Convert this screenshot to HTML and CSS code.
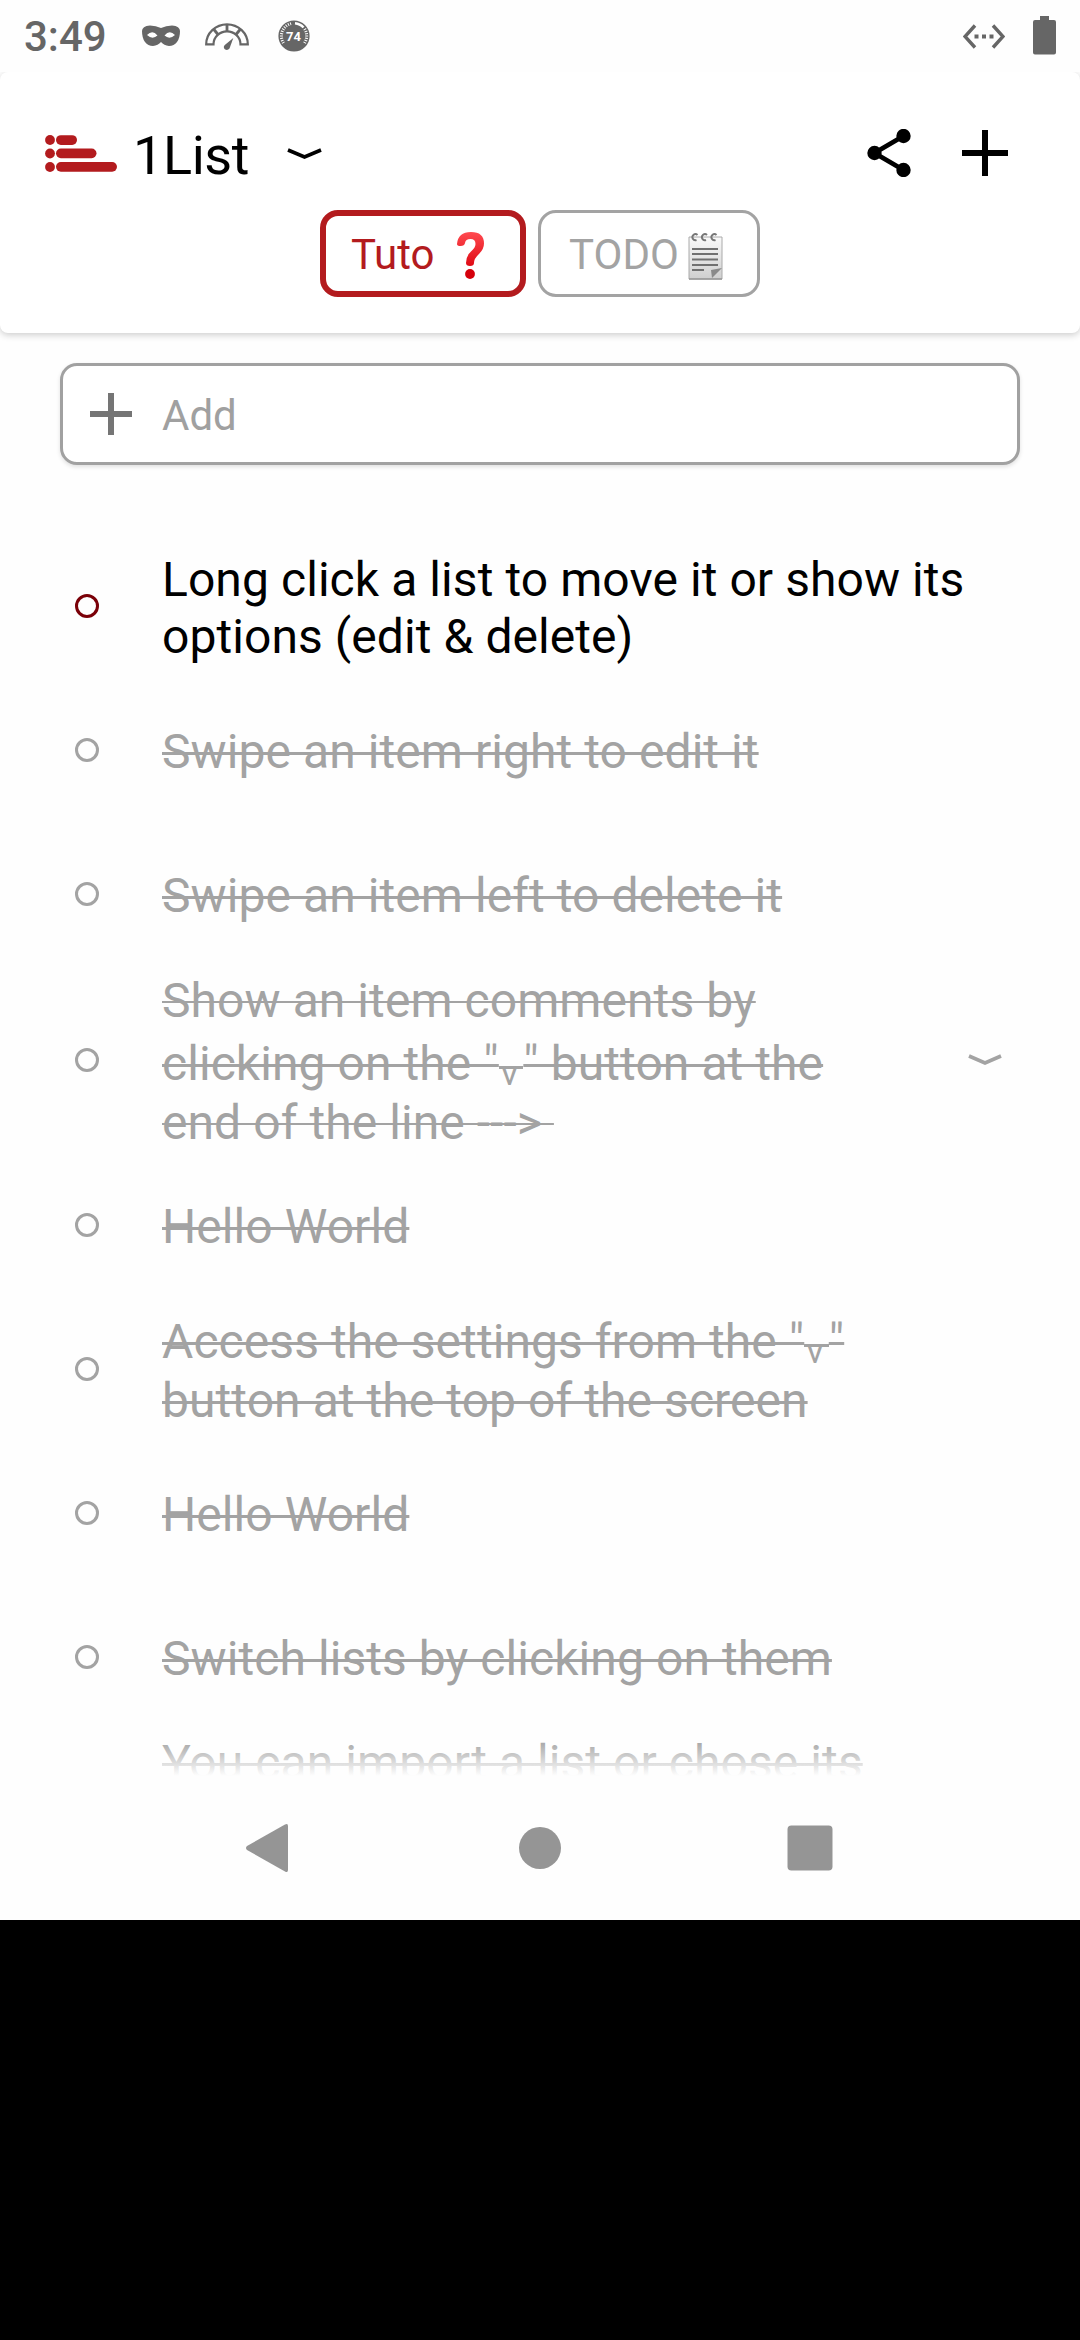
FILE: index.html
```html
<!DOCTYPE html>
<html lang="en">
<head>
<meta charset="utf-8">
<title>1List</title>
<link rel="stylesheet" href="styles.css">
</head>
<body>
<div class="phone">
  <div class="status">
    <span class="clock">3:49</span>
    <svg class="ic-mask" width="38" height="22" viewBox="0 0 38 22"><path fill="#666" fill-rule="evenodd" d="M0 6Q0 1 8 .4Q14 .4 19 3Q24 .4 30 .4Q38 1 38 6Q38 13 35 17Q32 21 27 21Q22 20.500 19 17Q16 20.500 11 21Q6 21 3 17Q0 13 0 6ZM5 10Q10.500 15 15.500 10.500Q10.500 4.500 5 10ZM22.500 10.500Q27.500 15 33 10Q27.500 4.500 22.500 10.500Z"/></svg>
    <svg class="ic-gauge" width="44" height="28" viewBox="0 0 44 28"><g fill="none" stroke="#666" stroke-width="2.200"><path d="M1.200 21.300A20.800 20 0 0 1 42.800 21.300H35.500A13.500 13 0 0 0 8.500 21.300Z"/><path stroke-width="2.800" d="M22 1V8.500M8.500 6L13 11.500M35.500 6L31 11.500"/></g><path fill="#666" d="M28.300 15L24.500 25.500Q22.500 28 19.800 26.300Q17.800 24 19.800 22Z"/></svg>
    <svg class="ic-temp" width="32" height="32" viewBox="0 0 32 32"><circle cx="16" cy="16" r="15.600" fill="#666"/><path d="M5.500 23A12.800 12.800 0 0 1 14 3.400M26.500 23A12.800 12.800 0 0 0 26 8" fill="none" stroke="#fff" stroke-width="3" stroke-dasharray="1 1.300"/><path d="M17 3.200A12.800 12.800 0 0 1 25.500 7.500" fill="none" stroke="#fff" stroke-width="2.600"/><text x="15.500" y="21" text-anchor="middle" class="temp">74</text></svg>
    <span class="grow"></span>
    <svg class="ic-net" width="42" height="26" viewBox="0 0 42 26"><path d="M12 1.500L2 12.500L12 23.500M30 1.500L40 12.500L30 23.500" fill="none" stroke="#666" stroke-width="3.400"/><path fill="#666" d="M11.500 10.500h4v4h-4zM19 10.500h4v4h-4zM26.500 10.500h4v4h-4z"/></svg>
    <svg class="ic-bat" width="23" height="39" viewBox="0 0 23 39"><path fill="#666" d="M7 0H16V4H21Q23 4 23 6V36.500Q23 38.500 21 38.500H2Q0 38.500 0 36.500V6Q0 4 2 4H7Z"/></svg>
  </div>
  <header class="header">
    <div class="bar">
      <svg class="logo" width="72" height="38" viewBox="0 0 72 38"><g fill="#b31b1e"><circle cx="5" cy="5" r="4.900"/><circle cx="5" cy="18.500" r="4.900"/><circle cx="5" cy="32" r="4.900"/><rect x="11" y=".2" width="21" height="9.700" rx="4.850"/><rect x="11" y="13.500" width="40.500" height="9.700" rx="4.850"/><rect x="11" y="27" width="61" height="9.700" rx="4.850"/></g></svg>
      <h1 class="title">1List</h1>
      <svg class="chev" width="35" height="12" viewBox="0 0 35 12"><path d="M1 2L17.500 9L34 2" fill="none" stroke="#000" stroke-width="3.600"/></svg>
      <span class="grow"></span>
      <svg class="share" width="44" height="48" viewBox="0 0 44 48"><path d="M36.500 7L7.500 24L36.500 41" fill="none" stroke="#000" stroke-width="4.800"/><circle cx="36.500" cy="7" r="7.200"/><circle cx="7.500" cy="24" r="7.200"/><circle cx="36.500" cy="41" r="7.200"/></svg>
      <svg class="plus" width="46" height="46" viewBox="0 0 46 46"><path d="M20 0h6v20h20v6H26v20H20V26H0V20H20z"/></svg>
    </div>
    <div class="tabs">
      <div class="tab active"><span>Tuto</span>
        <svg class="q" width="27" height="48" viewBox="0 0 27 48"><defs><linearGradient id="qg" x1="0" y1="0" x2="0" y2="1"><stop offset="0" stop-color="#ff4a50"/><stop offset="1" stop-color="#df0a14"/></linearGradient></defs><path d="M0 12Q1 0 14 0Q27 0 27 11.500Q27 17 22 22Q17 26.500 17 31Q17 34 13 34Q9 34 9 31Q9 24 14 19.500Q18.500 15.500 18.500 12Q18.500 7 13.500 7Q8.500 7 8 11Q7.500 14 3.500 14Q0 14 0 12Z" fill="url(#qg)"/><circle cx="13" cy="42" r="4.900" fill="#d5000b"/></svg>
      </div>
      <div class="tab"><span>TODO</span>
        <svg class="note" width="35" height="47" viewBox="0 0 35 47"><defs><linearGradient id="ng" x1="0" y1="0" x2="0" y2="1"><stop offset="0" stop-color="#fafafa"/><stop offset="1" stop-color="#cfcfcf"/></linearGradient></defs><path d="M1 4H34V46H1Z" fill="url(#ng)" stroke="#aaa" stroke-width="1"/><path d="M1 46H34" stroke="#999" stroke-width="1.500"/><path d="M4 16H30M4 21H30M4 26.500H30M4 32H30M4 37H16" stroke="#707070" stroke-width="2"/><path d="M23 37L34 35L24 45Z" fill="#8a8a8a"/><path d="M8.500 7A3 3 0 1 1 9.500 2M18 7A3 3 0 1 1 19 2M27.500 7A3 3 0 1 1 28.500 2" fill="none" stroke="#777" stroke-width="2"/></svg>
      </div>
    </div>
  </header>
  <main class="content">
    <div class="add"><svg width="42" height="42" viewBox="0 0 42 42"><path fill="#757575" d="M18 0h6v18h18v6H24v18H18V24H0V18H18z"/></svg><span>Add</span></div>
    <ul class="list">
      <li class="item open"><i class="dot"></i><p><span>Long click a list to move it or show its</span><span>options (edit &amp; delete)</span></p></li>
      <li class="item"><i class="dot"></i><p><span>Swipe an item right to edit it</span></p></li>
      <li class="item"><i class="dot"></i><p><span>Swipe an item left to delete it</span></p></li>
      <li class="item three"><i class="dot"></i><p><span class="thin">Show an item comments by</span><span class="tall">clicking on the "<b>v</b>" button at the</span><span class="thin">end of the line ---&gt;&nbsp;</span></p><svg class="chev" width="34" height="12" viewBox="0 0 34 12"><path d="M1 2L17 9L33 2" fill="none" stroke="#a3a3a3" stroke-width="3.600"/></svg></li>
      <li class="item"><i class="dot"></i><p><span>Hello World</span></p></li>
      <li class="item two"><i class="dot"></i><p><span class="tall">Access the settings from the "<b>v</b>"</span><span>button at the top of the screen</span></p></li>
      <li class="item"><i class="dot"></i><p><span>Hello World</span></p></li>
      <li class="item"><i class="dot"></i><p><span>Switch lists by clicking on them</span></p></li>
      <li class="item last"><p><span>You can import a list or chose its</span></p></li>
    </ul>
    <div class="fade"></div>
  </main>
  <nav class="nav">
    <svg width="42" height="48" viewBox="0 0 42 48"><path fill="#959595" d="M39 .5Q42 -1 42 2V46Q42 49 39 47.500L1 26Q-1 24 1 22Z"/></svg>
    <svg width="42" height="42" viewBox="0 0 42 42"><circle cx="21" cy="21" r="21" fill="#959595"/></svg>
    <svg width="46" height="46" viewBox="0 0 46 46"><rect x=".5" y=".5" width="45" height="45" rx="4" fill="#959595"/></svg>
  </nav>
</div>
</body>
</html>
```
FILE: styles.css
```css
* { box-sizing: border-box; margin: 0; padding: 0; }
body { background: #000; font-family: Roboto, sans-serif; }
svg { display: block; flex: none; }
.phone { width: 1080px; height: 1920px; background: #fefefe; display: flex; flex-direction: column; }
.grow { flex: 1; }
.status { height: 72px; flex: none; display: flex; align-items: flex-start; color: #666; padding: 0 24px; }
.clock { font-size: 42px; line-height: 50px; font-weight: 500; margin-top: 12px; width: 118px; }
.ic-mask { margin-top: 25px; }
.ic-gauge { margin: 23px 0 0 25px; }
.ic-temp { margin: 20px 0 0 29px; }
.temp { font: 700 13px Roboto, sans-serif; fill: #fff; }
.ic-net { margin: 24px 28px 0 0; }
.ic-bat { margin-top: 16px; }
.header { height: 261px; flex: none; background: #fff; border-radius: 8px; box-shadow: 0 2px 7px rgba(0,0,0,.2); clip-path: inset(0 0 -20px 0); }
.bar { height: 138px; padding: 0 72px 0 45px; display: flex; align-items: flex-start; }
.logo { margin-top: 63px; }
.title { font-size: 54px; font-weight: 400; line-height: 64px; letter-spacing: -.4px; margin: 52px 0 0 16px; width: 154px; }
.bar .chev { margin-top: 76px; }
.share { margin: 57px 51px 0 0; }
.plus { margin-top: 58px; }
.tabs { display: flex; justify-content: center; gap: 12px; height: 87px; }
.tab { width: 222px; border: 3px solid #a3a3a3; border-radius: 18px; color: #a3a3a3; font-size: 42px; line-height: 50px; padding: 17px 0 0 28px; display: flex; }
.tab.active { width: 206px; border: 6px solid #b31b1e; color: #b31b1e; padding: 14px 0 0 25px; }
.q { margin: 2px 0 0 22px; }
.note { margin: 3px 0 0 9px; }
.content { position: relative; flex: 1; padding-top: 30px; }
.add { margin: 0 60px; height: 102px; border: 3px solid #a1a1a1; border-radius: 17px; background: #fff; box-shadow: 0 2px 4px rgba(0,0,0,.12); display: flex; padding-left: 27px; }
.add svg { margin-top: 27px; }
.add span { font-size: 42px; line-height: 50px; color: #a0a0a0; margin: 25px 0 0 30px; }
.list { list-style: none; padding-top: 69px; height: 1311px; }
.item { height: 144px; display: flex; align-items: center; padding: 0 78px 0 75px; color: #a3a3a3; }
.item.three { height: 187px; }
.item .chev { margin-left: auto; }
.dot { flex: none; width: 24px; height: 24px; border: 3px solid currentColor; border-radius: 50%; margin-right: 63px; }
.item p { font-size: 48px; line-height: 57px; letter-spacing: .07px; padding-top: 3px; white-space: nowrap; }
.item p span { display: block; width: max-content; text-decoration: line-through 3px; }
.item p .thin { text-decoration-thickness: 2px; }
.item.open { color: #000; }
.item.open p span { text-decoration: none; }
.item.open .dot { border-color: #7a0008; }
/* lowered chevron letter: carries its own strike segment, level with the line's */
.item b { display: inline-block; width: 24.5px; height: 34px; padding-left: 2.5px; font-weight: 400; font-size: 34px; line-height: 34px; vertical-align: -5px; background: linear-gradient(currentColor, currentColor) 0 10px / 100% 3px no-repeat; }
.item .tall { height: 65px; padding-top: 6px; }
.item.two .tall { height: 62px; padding-top: 3px; }
.item.two p { padding-top: 1px; }
.item.last { padding-left: 162px; height: 48px; align-items: flex-start; }
.item.last p { padding-top: 5px; }
.fade { position: absolute; left: 0; right: 0; top: 1407px; height: 57px; background: linear-gradient(rgba(254,254,254,0), #fefefe 36px); }
.nav { height: 144px; flex: none; display: flex; gap: 231px; padding-left: 246px; align-items: center; }
.nav svg:last-child { margin-left: -5px; }
```
